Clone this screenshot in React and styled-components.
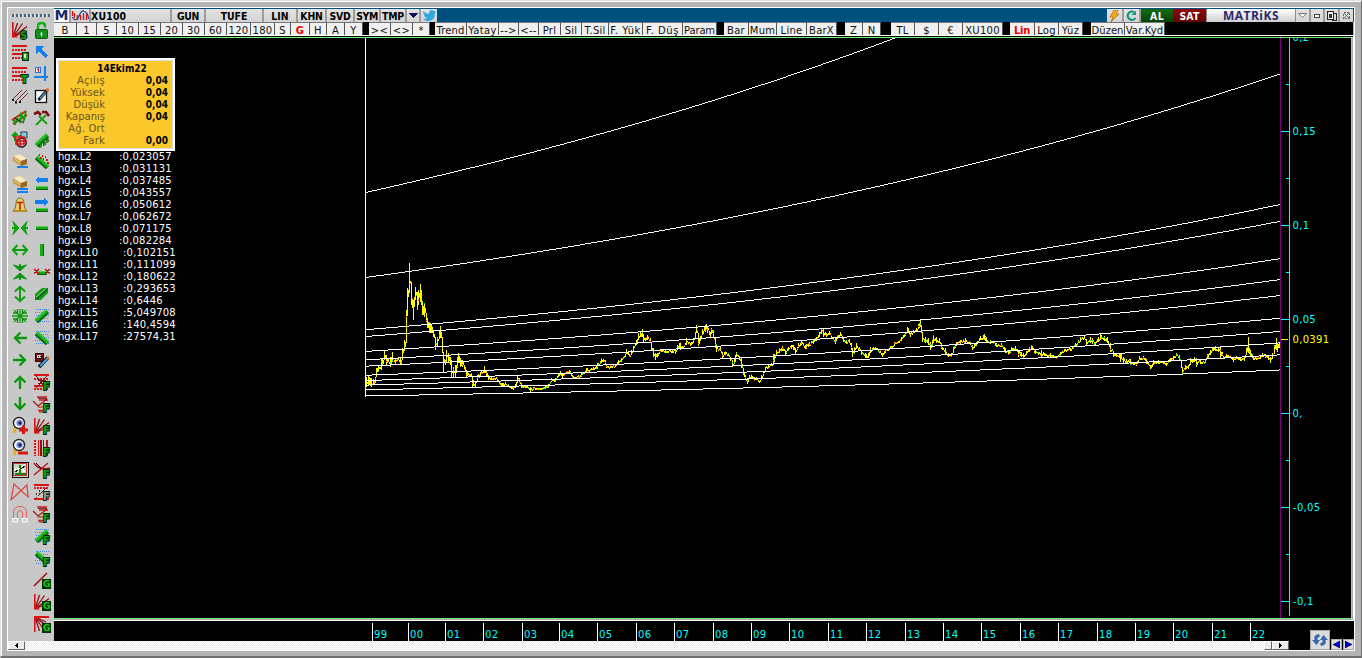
import React from "react";
import styled, { createGlobalStyle } from "styled-components";

const GlobalStyle = createGlobalStyle`
  html, body { margin: 0; padding: 0; overflow: hidden; background: #b4b4b4; }
  * { box-sizing: border-box; }
`;

const Frame = styled.div`
  width: 1362px;
  height: 658px;
  padding: 5px;
  background: #b4b4b4;
  border: 1px solid #dedede;
  border-right: 1px solid #707070;
  border-bottom: 2px solid #707070;
  box-shadow: inset 1px 1px 0 #fff;
  font-family: "DejaVu Sans", Verdana, sans-serif;
  font-size: 10px;
`;

const Shell = styled.div`
  display: grid;
  grid-template-columns: 46px 1235px 65px;
  grid-template-rows: 14px 14px 585px 20px 9px;
  width: 1348px;
  height: 644px;
  border: 1px solid #fff;
  margin: 1px 0 0 1px;
`;

const Sidebar = styled.div`
  grid-column: 1;
  grid-row: 1 / 5;
  background: #c8c8c8;
  padding: 6px 0 0 1px;
`;

const Grip = styled.div`
  height: 3px;
  width: 39px;
  margin-left: 3px;
  background: repeating-linear-gradient(90deg, #46647a 0 2px, #e4e4e4 2px 3px, #c8c8c8 3px 4px);
`;

const IconGrid = styled.div`
  display: grid;
  grid-template-columns: 22px 22px;
  grid-template-rows: repeat(28, 22px);
  grid-auto-flow: column;
  margin-top: 2px;
  svg { margin: 3px; display: block; overflow: visible; }
`;

const TitleBar = styled.div`
  grid-column: 2 / 4;
  grid-row: 1;
  display: flex;
  background: #00507e;
  padding-top: 1px;
  padding-right: 1px;
`;

const TitleButton = styled.div`
  width: ${(p) => p.$w}px;
  height: 13px;
  flex: none;
  display: flex;
  align-items: center;
  justify-content: ${(p) => (p.$left ? "flex-start" : "center")};
  background: ${(p) => p.$bg || "linear-gradient(#e2e2e2, #d4d4d4)"};
  color: ${(p) => p.$color || "#000"};
  border-right: ${(p) => (p.$flat ? 0 : 2)}px solid #9c9c9c;
  font: bold 10.4px "DejaVu Sans Condensed", "DejaVu Sans", sans-serif;
  font-stretch: condensed;
  letter-spacing: ${(p) => p.$ls || 0}px;
  white-space: nowrap;
`;

const Logo = styled(TitleButton)`
  font: bold 14px "DejaVu Sans", sans-serif;
  color: #182868;
  line-height: 13px;
`;

const Brand = styled(TitleButton)`
  background: linear-gradient(#fff, #cfcfcf);
  font: bold 12px "Open Sans", "Noto Sans", sans-serif;
  letter-spacing: 0.5px;
  color: #2b2a68;
  border: 1px solid #8a8a8a;
  border-width: 0 1px;
`;

const Spacer = styled.div`flex: 1;`;

const ToolRow = styled.div`
  grid-column: 2 / 4;
  grid-row: 2;
  display: flex;
  background: #000;
  border-bottom: 1px solid #fff;
  margin-right: 1px;
`;

const Tool = styled.div`
  width: ${(p) => p.$w}px;
  flex: none;
  height: 13px;
  display: flex;
  align-items: center;
  justify-content: center;
  padding-top: 2px;
  background: #f0f0f0;
  border-top: 1px solid #777;
  border-right: 1px solid #555;
  font-size: 10px;
  letter-spacing: ${(p) => p.$ls}px;
  line-height: 11px;
  white-space: pre;
  color: ${(p) => (p.$hot ? "#f00000" : "#111")};
  font-weight: ${(p) => (p.$hot ? "bold" : "normal")};
`;

const ToolGap = styled.div`width: ${(p) => p.$w}px; flex: none;`;

const ChartPane = styled.div`
  grid-column: 2 / 4;
  grid-row: 3;
  position: relative;
  background: #000;
  svg { display: block; }
`;

const Quote = styled.div`
  position: absolute;
  left: 2px;
  top: 22px;
  width: 119px;
  height: 93px;
  background: #fac82a;
  border: 2px solid #fff;
  box-shadow: inset 0 0 0 1px #dcdcdc;
  padding-top: 3px;
`;

const QuoteTitle = styled.div`
  height: 12px;
  padding-left: 13px;
  text-align: center;
  font: bold 10px/12px "DejaVu Sans Condensed", "DejaVu Sans", sans-serif;
  font-stretch: condensed;
`;

const QuoteRow = styled.div`
  display: flex;
  height: 12px;
  line-height: 12px;
  color: #6b5420;
  span { width: 47px; text-align: right; letter-spacing: ${(p) => p.$ls || 0}px; }
  b { flex: 1; text-align: right; color: #000; padding-right: 5px;
    font-family: "DejaVu Sans Condensed", "DejaVu Sans", sans-serif; font-stretch: condensed; }
`;

const Levels = styled.div`
  position: absolute;
  left: 4px;
  top: 115px;
  color: #fff;
`;

const Level = styled.div`
  display: flex;
  height: 12px;
  line-height: 12px;
  letter-spacing: 0.2px;
  span { width: ${(p) => (p.$wide ? 65 : 61)}px; letter-spacing: 0; }
`;

const TimeAxis = styled.div`
  grid-column: 2;
  grid-row: 4;
  background: #000;
  svg { display: block; }
`;

const Scroll = styled.div`
  grid-column: 1 / 3;
  grid-row: 5;
  display: flex;
  background: repeating-conic-gradient(#fff 0 25%, #ececec 0 50%) 0 0 / 2px 2px;
`;

const ScrollButton = styled.div`
  width: ${(p) => p.$w}px;
  height: 9px;
  display: flex;
  align-items: center;
  justify-content: center;
  background: #ececec;
  border: 1px solid #fff;
  border-right-color: #666;
  border-bottom-color: #666;
`;

const Corner = styled.div`
  grid-column: 3;
  grid-row: 4 / 6;
  background: #000;
  display: flex;
  align-items: flex-end;
  padding-left: 21px;
  gap: 1px;
`;

const CornerButton = styled.div`
  width: ${(p) => p.$s}px;
  height: ${(p) => p.$h}px;
  flex: none;
  display: flex;
  align-items: center;
  justify-content: center;
  background: #dcdcdc;
  border: 1px solid #a8a8a8;
`;

/* ---------- toolbar glyphs, 16 x 16 ---------- */
const R = "#d81414";
const G = "#10a010";
const B = "#1080f0";

const Glyph = ({ children, w = 16, h = 16, crisp = true }) => (
  <svg width={w} height={h} viewBox={`0 0 ${w} ${h}`} fill="none" shapeRendering={crisp ? "crispEdges" : "auto"}>
    {children}
  </svg>
);

const Tag = ({ t, x = 9, y = 16, fill = "#12a012" }) => (
  <text x={x} y={y} fontFamily="DejaVu Sans" fontWeight="bold" fontSize="10" fill={fill} stroke="#052005" strokeWidth="1.8" paintOrder="stroke">{t}</text>
);

const Boxed = ({ t }) => (
  <>
    <rect x="8" y="7" width="9" height="10" fill="#063006" />
    <text x="9" y="15.4" fontFamily="DejaVu Sans" fontWeight="bold" fontSize="9" fill="#18d018">{t}</text>
  </>
);

const Fan = () => (
  <g shapeRendering="auto">
    <path d="M.8 0V15" stroke={R} strokeWidth="1.6" />
    <path d="M1 15L5.5 1M1 15L10.5 1.5M1 15L15 4.5M1 15L12 10" stroke="#8c1014" strokeWidth="1.3" />
    <path d="M0 9L6 15.5H0Z" fill={R} />
  </g>
);

const Bars = ({ rows = [1, 5, 9, 13] }) => (
  <>
    {rows.map((y, i) => (
      <g key={y}>
        <rect x="0" y={y} width="15" height="1" fill="#301010" opacity={i % 2 ? 0 : 1} />
        <path d={`M0 ${y + 1}H15`} stroke={R} strokeWidth={i % 2 ? 2 : 1.2} strokeDasharray={i % 2 ? "2 1" : ""} />
      </g>
    ))}
  </>
);

const Rod = ({ flip }) => (
  <g transform={flip ? "translate(16 0) scale(-1 1)" : ""} shapeRendering="auto">
    <path d="M2.5 13.5L13.5 3.5" stroke="#06640c" strokeWidth="5" />
    <path d="M2 12.5L13 2.5" stroke="#18b41c" strokeWidth="3.4" />
    <path d="M1.5 11.5L12 2" stroke="#50d850" strokeWidth="1" />
  </g>
);

const Dots = () => (
  <path d="M2 1.5H15M1 4.5H15M2 7.5H15M1 10.5H15M2 13.5H15" stroke="#3c8cf0" strokeDasharray="1 1" />
);

const HBar = ({ y = 7, x = 2, w = 12 }) => (
  <>
    <rect x={x} y={y - 2} width={w} height="4" fill="#18a818" />
    <rect x={x} y={y + 1} width={w} height="1" fill="#086008" />
    <rect x={x} y={y - 2} width={w} height="1" fill="#48d048" />
  </>
);

const Arrow = ({ rot }) => (
  <g transform={`rotate(${rot} 8 8)`} shapeRendering="auto">
    <path d="M15 8H4M8.5 2.5L3 8L8.5 13.5" stroke="#0e980e" strokeWidth="2.4" />
  </g>
);

const Eraser = ({ n }) => (
  <g shapeRendering="auto">
    <path d="M1 2L8 0L15 5V10L9 12L1 7Z" fill="#c89840" />
    <path d="M1 2L8 0L15 5L9 7Z" fill="#f8ecc4" />
    <path d="M9 7V12L15 10V5Z" fill="#966820" />
    <path d="M2 3L8 7V10L2 6Z" fill="#d8b464" />
    <rect x="5" y="12" width="11" height="2" fill={B} />
    {n > 1 && <rect x="5" y="15" width="11" height="2" fill={B} />}
  </g>
);

const Lens = ({ plus }) => (
  <>
    <path d="M4 8L2 15" stroke="#e0b030" strokeWidth="3" />
    <circle cx="7" cy="5" r="5.5" fill="#fff" stroke="#222" strokeWidth="1.4" />
    <circle cx="7.5" cy="5" r="3.2" fill="#8090d8" />
    <circle cx="8" cy="5" r="1.7" fill="#142070" />
    <path d={plus ? "M7 12H16M11.5 7.5V16" : "M6 13H16"} stroke={R} strokeWidth="3" />
  </>
);

const Drop = () => (
  <g shapeRendering="auto">
    <path d="M3 1H13M5 4H14M4 14.5H10" stroke={R} strokeWidth="1.6" />
    <path d="M-1 5L4 10L13 3M4 11H10" stroke="#a01818" strokeWidth="1.2" />
    <path d="M4 2.4H13M5 16H10" stroke="#300" strokeWidth=".8" />
  </g>
);

const leftIcons = [
  <Glyph><Fan /><Tag t="S" x={8} y={16.5} /></Glyph>,
  <Glyph><Bars /><rect x="10" y="8" width="6" height="8" fill="#20a020" stroke="#062806" /><rect x="12" y="10" width="2" height="4" fill="#d8f0b0" /></Glyph>,
  <Glyph><Bars /><Tag t="T" x={9} y={16.5} /></Glyph>,
  <Glyph crisp={false}><path d="M1 11L10 2M3 14L15 2M8 13L16 5" stroke="#802830" /><path d="M0 12h2M3 14.5h2M7 14h2" stroke="#111" strokeWidth="2" /></Glyph>,
  <Glyph crisp={false}><path d="M0 10L14 1M1 14L15 5" stroke={R} strokeWidth="2" /><path d="M3 15L5 8L8 12L9 4L12 9L14 1M1 10L4 13M11 12L13 8" stroke={G} strokeWidth="1.8" /><path d="M2 8L12 13" stroke="#4a1010" /></Glyph>,
  <Glyph crisp={false}><path d="M0 4L3 1L6 4M3 1V9" stroke={G} strokeWidth="2" /><rect x="9" y="0" width="6" height="6" fill="#80c8e0" stroke="#164858" /><circle cx="9.5" cy="10.5" r="4.6" stroke="#181010" strokeWidth="1.5" /><path d="M1 5H12V12H4V6M4 9H15M8 3V15" stroke={R} strokeWidth="1.6" /></Glyph>,
  <Glyph><Eraser n={1} /></Glyph>,
  <Glyph><Eraser n={2} /></Glyph>,
  <Glyph crisp={false}><path d="M1 13Q4 11 4 6Q4 0 8 0T12 6Q12 11 15 13Z" fill="#e6d264" stroke="#806818" /><path d="M1 13H15" stroke="#b09020" strokeWidth="2" /><path d="M5 4.5H11M8 4.5V12" stroke={R} strokeWidth="1.6" /></Glyph>,
  <Glyph crisp={false}><path d="M0 8H6M16 8H10" stroke={G} strokeWidth="2" /><path d="M1 1.5L7 8L1 14.5L3 8ZM15 1.5L9 8L15 14.5L13 8Z" fill={G} stroke={G} /></Glyph>,
  <Glyph crisp={false}><path d="M1 8H15M5.5 3L.8 8L5.5 13M10.5 3L15.2 8L10.5 13" stroke={G} strokeWidth="2" /></Glyph>,
  <Glyph crisp={false}><path d="M8 0V6M8 16V10" stroke={G} strokeWidth="2" /><path d="M1.5 1L8 7L14.5 1L8 3ZM1.5 15L8 9L14.5 15L8 13Z" fill={G} stroke="#0c840c" /></Glyph>,
  <Glyph crisp={false}><path d="M8 1V15M3 5.5L8 .8L13 5.5M3 10.5L8 15.2L13 10.5" stroke={G} strokeWidth="2" /></Glyph>,
  <Glyph crisp={false}><path d="M0 8H16M8 1V15M2 2L14 14M14 2L2 14" stroke={G} strokeWidth="1.4" /><path d="M1 5H5.5V1M10.5 1V5H15M1 11H5.5V15M10.5 15V11H15" stroke="#0c880c" strokeWidth="1.3" /></Glyph>,
  <Glyph><Arrow rot={0} /></Glyph>,
  <Glyph><Arrow rot={180} /></Glyph>,
  <Glyph><Arrow rot={90} /></Glyph>,
  <Glyph><Arrow rot={270} /></Glyph>,
  <Glyph crisp={false}><Lens plus /></Glyph>,
  <Glyph crisp={false}><Lens /></Glyph>,
  <Glyph><rect x="0" y="0" width="16" height="15" fill="#c8d8c0" stroke="#181010" /><rect x="1.5" y="1.5" width="13" height="12" stroke="#d03030" /><path d="M8 3V13M3 12H14" stroke="#108010" strokeWidth="1.5" /><path d="M3 7L5 9L7 6M10 5L13 3M10 8L13 9" stroke="#fff" strokeWidth="2" /><path d="M9 7L13 4M3 10L6 8" stroke="#111" /></Glyph>,
  <Glyph crisp={false}><path d="M-1 16L2 0L16 13L15 1L-1 16" stroke="#e04848" strokeWidth="1.3" /></Glyph>,
  <Glyph crisp={false}><path d="M1.5 12V7Q1.5 .5 8 .5T14.5 7V12M5.5 12V7Q5.5 4.5 8 4.5T10.5 7V12" stroke="#e86060" /><path d="M1 12.5H5.5V16H1ZM10.5 12.5H15V16H10.5Z" stroke="#fff" strokeWidth="1.2" /></Glyph>,
];

const rightIcons = [
  <Glyph crisp={false}><path d="M4 8V4Q4 1 7.5 1T11 4V5.5" stroke="#10b010" strokeWidth="2.4" /><rect x="1.5" y="7.5" width="12" height="9" rx="1" fill="#109018" stroke="#085c0c" /><path d="M7.5 10V14.5M6 12H9" stroke="#d8f0d8" /></Glyph>,
  <Glyph><path d="M2 2H10L7 5L14 12L11 14L5 7L2 10Z" fill={B} /></Glyph>,
  <Glyph><path d="M11 0V15M0 11H14" stroke={B} strokeWidth="2" /><rect x="1.5" y="1.5" width="5" height="5" fill="#e8eefc" stroke={B} /><path d="M4.5 2V6M3 3.5H4" stroke={R} /></Glyph>,
  <Glyph crisp={false}><rect x="1.5" y="2.5" width="11" height="12" fill="#f4f6f8" stroke="#111" strokeWidth="1.3" /><path d="M4.5 12L13 2.5" stroke="#111" strokeWidth="3" /><path d="M6 10.5L12 4" stroke="#48a0c8" strokeWidth="1.3" /><circle cx="13.5" cy="2" r="1.8" fill="#e86828" /></Glyph>,
  <Glyph crisp={false}><path d="M2 15L12 5M13 14L5 6" stroke={G} strokeWidth="1.8" /><path d="M0 4L4 2L7 5M8 2H12L15 6" stroke="#781010" strokeWidth="2.6" /></Glyph>,
  <Glyph><Rod /><path d="M5 12h2v3h-2zM9 10h2v3h-2zM12 7h2v3h-2z" fill="#18b018" stroke="#075007" strokeWidth=".7" /></Glyph>,
  <Glyph><Rod flip /><path d="M5 1h1M8 2h1M11 3h1M6 4h2M9 5h1M12 6h2M13 9h2" stroke={R} strokeWidth="2" /></Glyph>,
  <Glyph><path d="M1 4L5 0V2H14V6H5V8Z" fill={B} /><HBar y={12} /></Glyph>,
  <Glyph><path d="M14 4L10 0V2H1V6H10V8Z" fill={B} /><HBar y={12} /></Glyph>,
  <Glyph><HBar y={8} /></Glyph>,
  <Glyph><rect x="6" y="2" width="4" height="12" fill="#18a818" /><rect x="9" y="2" width="1" height="12" fill="#086008" /></Glyph>,
  <Glyph crisp={false}><HBar y={9} x={3} w={10} /><path d="M0 5L5 9.5M5 5L0 9.5M11 5L16 9.5M16 5L11 9.5" stroke="#b01014" strokeWidth="1.5" /></Glyph>,
  <Glyph crisp={false}><path d="M1 13V8L8 2H14V7L7 14H1Z" fill="#149c18" /><path d="M2 13L13 3" stroke="#0a5c0e" strokeWidth="2" /><path d="M2 11.5L12 2.5" stroke="#a0dca0" /></Glyph>,
  <Glyph><Dots /><Rod /></Glyph>,
  <Glyph><Dots /><Rod flip /></Glyph>,
  <Glyph><rect x="1" y="1" width="8" height="8" fill="#781018" stroke="#220408" /><rect x="3" y="3" width="4" height="4" fill="#e8d8d8" /><path d="M4 4v1M6 4v1M3 6h4" stroke="#111" /><g shapeRendering="auto"><path d="M5 15L14 5.5" stroke="#111" strokeWidth="3.6" /><path d="M6 14L13 7" stroke="#38a8e8" strokeWidth="2" /><path d="M13 7L15 4.8" stroke="#e08030" strokeWidth="2.4" /></g></Glyph>,
  <Glyph><Bars rows={[0, 4, 11, 14]} /><path d="M2 2L12 14M13 2L2 14M4 6H12M4 9H12" stroke="#70181c" /><Tag t="F" /></Glyph>,
  <Glyph><Drop /><Tag t="F" /></Glyph>,
  <Glyph><Fan /><Tag t="F" /></Glyph>,
  <Glyph><path d="M1 0V16" stroke={R} strokeWidth="2" strokeDasharray="2 1" /><rect x="4" y="0" width="1" height="16" fill={R} /><rect x="6" y="0" width="2" height="16" fill="#901018" /><rect x="9" y="0" width="1" height="16" fill="#901018" /><rect x="12" y="0" width="2" height="16" fill="#b01820" /><Tag t="F" /></Glyph>,
  <Glyph crisp={false}><path d="M0 13L6 8L14 1M0 1Q5 9 16 6" stroke="#b01820" strokeWidth="1.5" /><path d="M2 1L8 7" stroke="#300" /><Tag t="F" /></Glyph>,
  <Glyph><Bars rows={[0, 3, 14]} /><path d="M2 14L12 4M2 9V12M5 6V10" stroke="#333" strokeDasharray="2 1" /><Tag t="F" fill="#999" /></Glyph>,
  <Glyph><Drop /><Tag t="F" /></Glyph>,
  <Glyph><Dots /><Rod /><Tag t="F" /></Glyph>,
  <Glyph><Dots /><Rod flip /><Tag t="F" /></Glyph>,
  <Glyph><path d="M0 14L13 1" stroke="#a01018" strokeWidth="1.6" shapeRendering="auto" /><Boxed t="G" /></Glyph>,
  <Glyph><Fan /><Boxed t="G" /></Glyph>,
  <Glyph><g transform="translate(0 16) scale(1 -1)"><Fan /></g><path d="M0 1H15" stroke={R} strokeWidth="2" /><Boxed t="G" /></Glyph>,
];

/* ---------- chart ---------- */
const LEVELS = ["0,023057", "0,031131", "0,037485", "0,043557", "0,050612", "0,062672", "0,071175", "0,082284", "0,102151", "0,111099", "0,180622", "0,293653", "0,6446", "5,049708", "140,4594", "27574,31"];
const X0 = 365;
const X1 = 1280;
const ZERO = 413;
const UNIT = 1880;

/* One-pixel-high runs, so each growth curve steps like a raster line. */
const curvePath = (value) => {
  let d = "";
  let start = X0;
  let prev = null;
  for (let x = X0; x <= X1; x++) {
    const t = (x - X0) / (X1 - X0);
    const y = x === X1 ? null : Math.round(ZERO - 0.2 - value * UNIT * Math.pow(0.4, 1 - t));
    if (y !== prev) {
      if (prev !== null && prev > 37) d += `M${start} ${prev + 0.5}H${x}`;
      start = x;
      prev = y;
    }
  }
  return d;
};
const curves = LEVELS.map((v) => parseFloat(v.replace(",", "."))).filter((v) => v < 0.5).map(curvePath).join("");

/* Weekly ranges, "x:high-low" in thirds of a pixel from (origin, 250). */
const RANGES = [
  [360, "18:380-410 25:375-405 35:385-410 45:380-400 48:355-375 55:345-365 65:325-360 72:302-330 80:315-345 90:320-350 97:305-335 105:325-345 115:325-330 122:325-345 128:295-325 133:270-300 138:240-280 140:180-240 143:115-185 147:90-120 149:40-130 153:95-165 157:145-175 160:150-210 164:140-160 167:110-150 171:125-180 176:120-160 180:102-155 184:120-165 188:155-195 193:160-200 198:190-215 203:205-235 208:215-250 214:225-250 220:240-260 225:260-300 232:260-290 238:240-265 242:228-265 246:260-310 250:305-370 255:330-345 260:300-340 265:310-335 270:320-345 275:335-380 280:350-380 286:345-385 292:320-350 296:310-340 302:325-350 308:330-352 314:345-360 318:360-385 325:368-380 333:370-380 338:385-410 345:395-410 352:375-395 360:365-378 372:348-370 380:362-378 385:375-390 395:380-390 410:380-388 418:392-402 425:400-412 436:395-402 445:403-412 460:412-418 468:395-412 472:378-395 478:385-400 485:402-413 500:405-413 510:412-425 520:412-418 545:413-417 555:408-412 565:403-410 575:385-395 585:385-395 595:370-382 600:362-375 607:372-385 615:365-372 627:360-368 635:368-378 642:380-385 655:375-382 665:370-376 680:355-368 700:352-360 712:340-356 725:325-335 735:330-342 740:345-355 750:345-355 765:343-350 775:330-338 785:325-332 795:310-322 800:298-312 808:312-322 815:300-312 820:288-296 830:270-282 836:250-268 842:245-262 847:238-260 850:255-275 857:262-272 863:255-270 870:265-280 873:280-300 880:295-320 885:310-330 893:310-322"],
  [660, "0:297-303 15:300-310 30:298-305 45:298-312 52:285-298 60:275-300 68:290-298 80:265-282 90:278-288 100:265-280 105:245-262 110:225-250 116:260-288 122:258-272 128:238-252 135:225-245 138:222-240 143:232-250 150:245-262 155:235-250 160:240-265 165:265-295 170:285-305 180:292-302 187:308-325 195:302-315 205:308-318 212:320-332 218:335-350 225:315-335 230:305-320 238:318-330 243:325-355 250:355-375 255:375-390 262:385-402 268:375-385 275:372-385 283:380-392 290:380-390 297:392-398 305:375-388 315:350-365 325:345-355 335:340-346 341:312-345 350:300-315 357:295-310 367:288-302 375:300-315 385:290-302 393:284-296 400:285-300 406:295-312 415:280-292 425:272-285 435:285-298 445:278-290 460:268-278 470:262-272 478:245-260 484:235-248 490:238-262 500:250-262 507:243-252 515:255-265 525:262-282 532:255-265 540:247-258 550:260-275 558:270-282 567:268-278 574:278-300 577:300-320 583:290-312 590:280-295 597:290-302 605:303-315 615:310-325 625:310-325 632:292-305 645:290-297 660:300-307 668:308-320 675:298-308 690:288-298 703:275-285 715:272-280 725:260-272 735:245-258 743:230-250 750:248-262 760:240-250 770:235-247 776:222-238 781:210-230 784:225-250 788:250-275 795:262-280 805:265-285 812:275-300 820:255-280 830:262-280 838:265-280 845:280-298 855:295-312 865:310-320 875:308-320 880:290-302 890:275-285"],
  [960, "0:270-282 15:265-278 27:272-282 38:285-300 48:275-288 60:258-270 72:252-270 80:262-278 90:270-282 100:272-282 110:280-292 125:278-292 135:295-308 145:300-315 155:292-304 165:288-300 175:300-320 190:310-325 200:302-315 207:290-305 215:285-300 225:300-310 235:305-315 245:300-325 255:308-318 270:310-320 290:318-325 300:305-318 312:296-305 330:295-302 345:280-292 360:262-275 373:258-268 380:268-285 390:262-280 398:265-282 405:275-286 415:262-275 422:252-270 432:258-272 442:262-280 450:280-305 460:302-320 470:312-322 482:310-335 490:322-338 500:328-342 510:328-345 520:335-345 530:335-348 537:317-330 550:317-328 560:328-342 572:345-358 580:330-345 595:330-340 605:333-340 618:335-348 630:325-335 640:318-328 650:308-318 658:315-330 663:330-355 668:355-372 675:345-360 685:345-355 692:325-340 703:320-335 710:325-350 720:330-342 735:328-340 742:312-328 752:300-312 758:290-302 765:288-302 775:292-305 782:290-325 790:318-328 800:312-320 810:315-325 820:322-335 830:318-325 840:325-332 852:322-332 858:295-315 862:290-305 866:260-310 870:300-322 880:320-330 890:320-330 900:315-328 907:308-322 915:312-325 925:318-330 930:320-340 938:310-322 943:285-305 948:265-300 952:280-305 957:275-295 961:268-280"],
];
const samples = RANGES.flatMap(([ox, s]) =>
  s.split(" ").map((e) => {
    const [x, r] = e.split(":");
    const [h, l] = r.split("-").map(Number);
    return [ox + x / 3, 250 + h / 3, 250 + l / 3];
  })
);
const noise = (n) => {
  const v = Math.sin(n * 127.1 + 11.7) * 43758.5453;
  return v - Math.floor(v);
};
const price = { y: "", g: "", r: "" };
{
  let i = 0;
  let prevTop = 380;
  let prevEnd = 386;
  for (let x = 366; x < 1281; x++) {
    while (i < samples.length - 2 && samples[i + 1][0] < x) i++;
    const [xa, ha, la] = samples[i];
    const [xb, hb, lb] = samples[i + 1];
    const t = Math.min(1, Math.max(0, (x - xa) / (xb - xa)));
    const h = ha + (hb - ha) * t;
    const l = la + (lb - la) * t;
    const span = l - h;
    let top = Math.round(h + span * 0.6 * noise(x));
    let end = Math.max(top + 2, Math.round(l - span * 0.5 * noise(x + 3000)));
    samples.forEach(([sx, sh, sl]) => {
      if (Math.floor(sx) === x) {
        top = Math.min(top, Math.round(sh));
        end = Math.max(end, Math.round(sl));
      }
    });
    if (top > prevEnd) top = prevEnd;
    if (end < prevTop) end = prevTop;
    prevTop = top;
    prevEnd = end;
    const len = end - top;
    price.y += `M${x + 0.5} ${top}v${len}`;
    const k = noise(x + 700);
    const dot = `M${x + 0.5} ${top + Math.floor(noise(x + 90) * len)}v1`;
    if (k < 0.24) price.g += dot;
    else if (k < 0.48) price.r += dot;
  }
}

const MAJOR = [[37, "0,2"], [131, "0,15"], [225, "0,1"], [319, "0,05"], [413, "0,"], [507, "-0,05"], [601, "-0,1"]];
const YEARS = [[372, "99"], [408, "00"], [445, "01"], [483, "02"], [522, "03"], [559, "04"], [597, "05"], [636, "06"], [674, "07"], [713, "08"], [751, "09"], [789, "10"], [828, "11"], [866, "12"], [905, "13"], [943, "14"], [981, "15"], [1020, "16"], [1058, "17"], [1097, "18"], [1135, "19"], [1173, "20"], [1212, "21"], [1250, "22"]];

const Chart = () => (
  <svg width="1300" height="585" viewBox="54 36 1300 585" fill="none" fontFamily="DejaVu Sans" fontSize="10" letterSpacing=".3">
    <defs><clipPath id="plot"><rect x="54" y="38" width="1297" height="580" /></clipPath></defs>
    <g shapeRendering="crispEdges">
      <path d={price.y} stroke="#ff0" />
      <path d={price.g} stroke="#00f030" />
      <path d={price.r} stroke="#f02010" />
      <path d={curves} stroke="#fff" />
      <path d="M365.5 38V397" stroke="#fff" />
      <path d="M1280.5 36V619" stroke="#800080" />
      <path d="M1289.5 38V616" stroke="#0ff" />
      {MAJOR.map(([y]) => <path key={y} d={`M1281 ${y + 0.5}H1289${y === 601 ? "" : `M1286 ${y + 47.5}H1289`}`} stroke="#0ff" />)}
      <path d="M1281 339.5H1288" stroke="#ff0" />
      <path d="M54 37.5H1351.5V618.5H54" stroke="#78f078" />
      <path d="M1352.5 37V619.5H54" stroke="#a8a8a8" />
      <path d="M1353.5 36V620.5H54" stroke="#fff" />
    </g>
    <g fill="#0ff" clipPath="url(#plot)">
      {MAJOR.map(([y, t]) => <text key={y} x={t[0] === "-" ? 1293 : 1292.5} y={y + 4}>{t}</text>)}
      <text x="1292.5" y="343" fill="#ff0">0,0391</text>
    </g>
  </svg>
);

const TOOLS = [
  [23, "B"], [20, "1"], [20, "5"], [22, "10"], [22, "15"], [22, "20"], [22, "30"], [22, "60"], [24, "120"], [24, "180"], [16, "S"], [19, "G", 1], [17, "H"], [18, "A"], [18, "Y"], [6],
  [22, "><"], [22, "<>"], [17, "*"], [5], [32, "Trend"], [32, "Yatay"], [20, "-->"], [20, "<--"], [22, "Prl"], [21, "Sil"], [27, "T.Sil"], [34, "F. Yük"], [40, "F. Düş"], [34, "Param"], [7],
  [25, "Bar"], [28, "Mum"], [30, "Line"], [30, "BarX"], [8], [18, "Z"], [18, "N"], [10], [24, "TL"], [24, "$"], [24, "€"], [40, "XU100"], [7],
  [25, "Lin", 1], [24, "Log"], [24, "Yüz"], [8], [34, "Düzen"], [40, "Var.Kyd"],
];
const SPACING = { Trend: 0.15, Yatay: 0.3, "F. Yük": 0.5, "F. Düş": 0.5, Param: -0.15, "T.Sil": 0.2, Düzen: 0, "Var.Kyd": 0.15, Lin: -0.3 };

const QUOTES = [["Açılış", "0,04", 0.4], ["Yüksek", "0,04", 0.1], ["Düşük", "0,04"], ["Kapanış", "0,04"], ["Ağ. Ort", "", 0.2], ["Fark", "0,00", 0.2]];

export default function App() {
  return (
    <>
      <GlobalStyle />
      <Frame>
        <Shell>
          <Sidebar>
            <Grip />
            <IconGrid>
              {leftIcons.map((icon, i) => <div key={`l${i}`}>{icon}</div>)}
              {[0, 1, 2, 3, 4].map((i) => <div key={`e${i}`} />)}
              {rightIcons.map((icon, i) => <div key={`r${i}`}>{icon}</div>)}
            </IconGrid>
          </Sidebar>

          <TitleBar>
            <Logo $w={17} $bg="#fff">M</Logo>
            <TitleButton $w={20}><Glyph w={18} h={12} crisp={false}><path d="M1.5 1V6M3.5 3V8M6.5 5V10M9.5 5V10M12.5 3V10M15.5 4V10" stroke={R} strokeWidth="1.4" /><path d="M1 7Q5 13 8 6T13 1.5Q17 2 17.5 9" stroke="#223080" strokeWidth="1.1" /></Glyph></TitleButton>
            <TitleButton $w={81} $left $ls={0.2}>XU100</TitleButton>
            <TitleButton $w={34} $ls={-0.3}>GUN</TitleButton>
            <TitleButton $w={58}>TUFE</TitleButton>
            <TitleButton $w={34}>LIN</TitleButton>
            <TitleButton $w={29} $ls={-0.2}>KHN</TitleButton>
            <TitleButton $w={28} $ls={-0.2}>SVD</TitleButton>
            <TitleButton $w={26} $ls={-0.4}>SYM</TitleButton>
            <TitleButton $w={26} $ls={-0.2}>TMP</TitleButton>
            <TitleButton $w={14}><Glyph w={9} h={5}><path d="M0 0H9L4.5 5Z" fill="#101060" /></Glyph></TitleButton>
            <TitleButton $w={16} $flat><Glyph w={13} h={11} crisp={false}><path d="M0 9Q3 9 4 8Q1 7 1 5H2Q0 4 0 1Q3 4 6 4Q6 0 9 0L11 1H13L12 3Q12 11 5 11Q2 11 0 9Z" fill="#30a8e0" /></Glyph></TitleButton>
            <Spacer />
            <TitleButton $w={17}><Glyph w={11} h={12} crisp={false}><path d="M5 0H9L7 4H10L2 12L4 7H1Z" fill="#f8a818" stroke="#b06808" strokeWidth=".7" /></Glyph></TitleButton>
            <TitleButton $w={17}><Glyph w={11} h={11} crisp={false}><path d="M9.5 8A4.2 4.2 0 1 1 8 2" stroke="#10987c" strokeWidth="2.2" /><path d="M5.5 5H10V.5Z" fill="#10987c" /></Glyph></TitleButton>
            <TitleButton $w={32} $flat $ls={0.4} $bg="linear-gradient(#126c12, #064006)" $color="#fff">AL</TitleButton>
            <TitleButton $w={33} $flat $ls={0.2} $bg="linear-gradient(#900808, #600404)" $color="#fff">SAT</TitleButton>
            <Brand $w={90}>MATRiKS</Brand>
            <TitleButton $w={15}><Glyph w={9} h={5} crisp={false}><path d="M.5 .5H8.5L4.5 4.5Z" fill="#fff" stroke="#777" /></Glyph></TitleButton>
            <TitleButton $w={14}><Glyph w={6} h={4}><rect x=".5" y=".5" width="5" height="3" fill="#fff" stroke="#444" /></Glyph></TitleButton>
            <TitleButton $w={15}><Glyph w={10} h={10}><rect x=".5" y=".5" width="6" height="8" fill="#eee" stroke="#222" /><path d="M7 2.5H9.5V9.5H5" stroke="#222" /><rect x="2" y="3" width="3" height="4" fill="#333" /></Glyph></TitleButton>
            <TitleButton $w={13} $flat><Glyph w={7} h={7}><rect x=".5" y=".5" width="6" height="6" stroke="#666" strokeDasharray="2 1" /><path d="M1 1L6 6M6 1L1 6" stroke="#777" /></Glyph></TitleButton>
          </TitleBar>

          <ToolRow>
            {TOOLS.map(([w, label, hot], i) =>
              label ? <Tool key={i} $w={w} $hot={hot} $ls={SPACING[label] ?? 0.25}>{label}</Tool> : <ToolGap key={i} $w={w} />
            )}
          </ToolRow>

          <ChartPane>
            <Chart />
            <Levels>
              {LEVELS.map((v, i) => <Level key={v} $wide={i > 7}><span>hgx.L{i + 2}</span>:{v}</Level>)}
            </Levels>
            <Quote>
              <QuoteTitle>14Ekim22</QuoteTitle>
              {QUOTES.map(([k, v, ls]) => <QuoteRow key={k} $ls={ls}><span>{k}</span><b>{v}</b></QuoteRow>)}
            </Quote>
          </ChartPane>

          <TimeAxis>
            <svg width="1235" height="20" viewBox="54 621 1235 20" fontFamily="DejaVu Sans" fontSize="10" letterSpacing=".3">
              {YEARS.map(([x, t]) => (
                <g key={t}>
                  <path d={`M${x + 0.5} 623V641`} stroke="#fff" shapeRendering="crispEdges" />
                  <text x={x + 2} y="638" fill="#0ff">{t}</text>
                </g>
              ))}
            </svg>
          </TimeAxis>

          <Scroll>
            <ScrollButton $w={17}><Glyph w={3} h={5}><path d="M3 0V5L0 2.5Z" fill="#000" /></Glyph></ScrollButton>
            <Spacer />
            <ScrollButton $w={8} />
            <ScrollButton $w={17}><Glyph w={3} h={5}><path d="M0 0V5L3 2.5Z" fill="#000" /></Glyph></ScrollButton>
          </Scroll>

          <Corner>
            <CornerButton $s={20} $h={20}><Glyph w={16} h={14} crisp={false}><path d="M7 1Q1 2 2.5 7L0 7L4.5 12L8 7H5.5Q5 4 8 3.5ZM9 13Q15 12 13.5 7L16 7L11.5 2L8 7H10.5Q11 10 8 10.5Z" fill="#3468a8" /></Glyph></CornerButton>
            <CornerButton $s={11} $h={11}><Glyph w={7} h={7}><path d="M7 0V7L0 3.5Z" fill="#0000c8" stroke="#000040" strokeWidth=".6" /></Glyph></CornerButton>
            <CornerButton $s={11} $h={11}><Glyph w={7} h={7}><path d="M0 0V7L7 3.5Z" fill="#0000c8" stroke="#000040" strokeWidth=".6" /></Glyph></CornerButton>
          </Corner>
        </Shell>
      </Frame>
    </>
  );
}
